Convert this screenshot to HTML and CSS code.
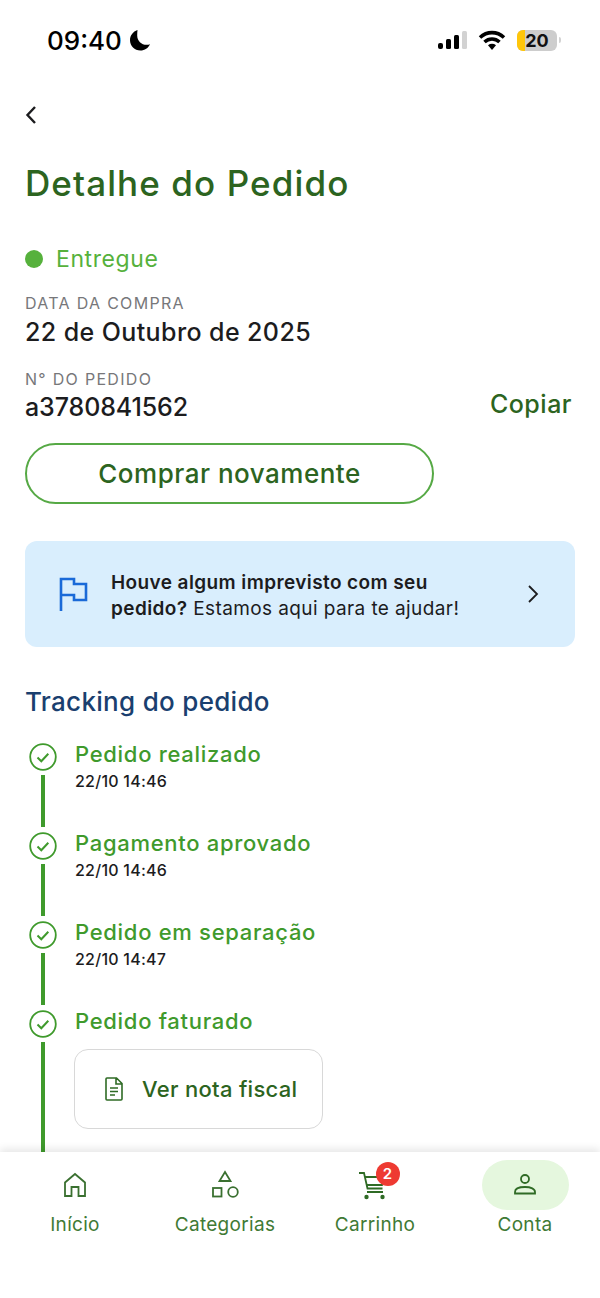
FILE: index.html
```html
<!DOCTYPE html>
<html lang="pt-BR">
<head>
    <meta charset="UTF-8">
    <meta name="viewport" content="width=device-width, initial-scale=1.0">
    <title>Detalhe do Pedido</title>
    <link rel="stylesheet" href="styles.css">
</head>
<body>
    <div class="status-bar">
        <div class="status-left">
            <span class="clock">09:40</span>
            <svg class="moon" width="24" height="24" viewBox="0 0 24 24"><path d="M9.500 2C5 3.500 2 7.500 2 12.200 2 18 6.600 22.500 12.400 22.500c4.300 0 8-2.500 9.600-6.300-1 .4-2.200.6-3.400.6-5.200 0-9.400-4.200-9.400-9.400 0-1.900.1-3.600.3-5.400z" fill="#000"/></svg>
        </div>
        <div class="status-right">
            <svg width="30" height="20" viewBox="0 0 30 20"><rect x="0" y="13" width="5" height="6" rx="2" fill="#000"/><rect x="8" y="9" width="5" height="10" rx="1.500" fill="#000"/><rect x="16" y="5" width="5" height="14" rx="1.500" fill="#000"/><rect x="24" y="1" width="5" height="18" rx="1.500" fill="#d2d2d2"/></svg>
            <svg class="wifi" width="28" height="22" viewBox="0 0 28 22"><path d="M2 8.500C9 2 19 2 26 8.500M6.500 13c4.500-4 10.500-4 15 0" fill="none" stroke="#000" stroke-width="3.600"/><path d="M10 16.200c2.400-1.900 5.600-1.900 8 0L14 21z" fill="#000"/></svg>
            <div class="battery"><span class="battery-fill"></span><span class="battery-num">20</span></div>
            <span class="battery-cap"></span>
        </div>
    </div>

    <main class="content">
        <a class="back" href="#">
            <svg width="12" height="20" viewBox="0 0 12 20"><path d="M10 2L2.500 10 10 18" fill="none" stroke="#1c1c1e" stroke-width="2.400"/></svg>
        </a>

        <h1 class="page-title">Detalhe do Pedido</h1>

        <div class="order-status"><span class="dot"></span>Entregue</div>

        <div class="field-label">DATA DA COMPRA</div>
        <div class="field-value">22 de Outubro de 2025</div>

        <div class="order-row">
            <div>
                <div class="field-label">N° DO PEDIDO</div>
                <div class="field-value">a3780841562</div>
            </div>
            <a class="copy" href="#">Copiar</a>
        </div>

        <button class="btn-again" type="button">Comprar novamente</button>

        <div class="help-card">
            <svg class="flag" width="30" height="35" viewBox="0 0 30 35"><path d="M3 34V2h13v5h12v16H16v-5H3" fill="none" stroke="#1a6ad8" stroke-width="2.600"/></svg>
            <p class="help-text"><b>Houve algum imprevisto com seu</b> <b>pedido?</b> Estamos aqui para te ajudar!</p>
            <svg class="help-arrow" width="12" height="20" viewBox="0 0 12 20"><path d="M2 2l8 8-8 8" fill="none" stroke="#1c1c1e" stroke-width="1.800"/></svg>
        </div>

        <h2 class="tracking-title">Tracking do pedido</h2>

        <ul class="timeline">
            <li class="step">
                <div class="step-mark">
                    <svg width="28" height="28" viewBox="0 0 28 28"><circle cx="14" cy="14" r="12.800" fill="none" stroke="#3f9a2c" stroke-width="1.800"/><path d="M8.500 14.500l3.800 3.800 7-7.500" fill="none" stroke="#3f9a2c" stroke-width="2"/></svg>
                    <span class="step-line"></span>
                </div>
                <div class="step-body">
                    <div class="step-title">Pedido realizado</div>
                    <div class="step-date">22/10 14:46</div>
                </div>
            </li>
            <li class="step">
                <div class="step-mark">
                    <svg width="28" height="28" viewBox="0 0 28 28"><circle cx="14" cy="14" r="12.800" fill="none" stroke="#3f9a2c" stroke-width="1.800"/><path d="M8.500 14.500l3.800 3.800 7-7.500" fill="none" stroke="#3f9a2c" stroke-width="2"/></svg>
                    <span class="step-line"></span>
                </div>
                <div class="step-body">
                    <div class="step-title">Pagamento aprovado</div>
                    <div class="step-date">22/10 14:46</div>
                </div>
            </li>
            <li class="step">
                <div class="step-mark">
                    <svg width="28" height="28" viewBox="0 0 28 28"><circle cx="14" cy="14" r="12.800" fill="none" stroke="#3f9a2c" stroke-width="1.800"/><path d="M8.500 14.500l3.800 3.800 7-7.500" fill="none" stroke="#3f9a2c" stroke-width="2"/></svg>
                    <span class="step-line"></span>
                </div>
                <div class="step-body">
                    <div class="step-title">Pedido em separação</div>
                    <div class="step-date">22/10 14:47</div>
                </div>
            </li>
            <li class="step step-last">
                <div class="step-mark">
                    <svg width="28" height="28" viewBox="0 0 28 28"><circle cx="14" cy="14" r="12.800" fill="none" stroke="#3f9a2c" stroke-width="1.800"/><path d="M8.500 14.500l3.800 3.800 7-7.500" fill="none" stroke="#3f9a2c" stroke-width="2"/></svg>
                    <span class="step-line"></span>
                </div>
                <div class="step-body">
                    <div class="step-title">Pedido faturado</div>
                    <a class="invoice" href="#">
                        <svg width="20" height="24" viewBox="0 0 20 24"><path d="M3 1h9.500l5.500 5.500V22a1 1 0 0 1-1 1H3a1 1 0 0 1-1-1V2a1 1 0 0 1 1-1zM12 1v6h6M6 11h8M6 14.500h8M6 18h5" fill="none" stroke="#2f6b25" stroke-width="1.600"/></svg>
                        Ver nota fiscal
                    </a>
                </div>
            </li>
        </ul>
    </main>

    <nav class="tab-bar">
        <a class="tab" href="#">
            <span class="tab-icon"><svg width="26" height="28" viewBox="0 0 26 28"><path d="M3 25V11.500L13 3l10 8.500V25h-6.500v-9h-7v9z" fill="none" stroke="#3a7030" stroke-width="1.800"/></svg></span>
            <span>Início</span>
        </a>
        <a class="tab" href="#">
            <span class="tab-icon"><svg width="30" height="30" viewBox="0 0 30 30"><path d="M15 2l5.500 9h-11z" fill="none" stroke="#3a7030" stroke-width="1.800"/><rect x="3" y="18" width="8.500" height="8.500" fill="none" stroke="#3a7030" stroke-width="1.800"/><circle cx="23" cy="22" r="4.800" fill="none" stroke="#3a7030" stroke-width="1.800"/></svg></span>
            <span>Categorias</span>
        </a>
        <a class="tab" href="#">
            <span class="tab-icon">
                <svg class="cart" width="30" height="30" viewBox="0 0 30 30"><path d="M1 3h5l3.500 15.500h15M7 7h19l-2 8H8.800M9 22h16" fill="none" stroke="#2f6b25" stroke-width="1.800"/><circle cx="8.500" cy="27" r="2.200" fill="#2f6b25"/><circle cx="24.500" cy="27" r="2.200" fill="#2f6b25"/></svg>
                <span class="badge">2</span>
            </span>
            <span>Carrinho</span>
        </a>
        <a class="tab tab-active" href="#">
            <span class="tab-icon"><svg width="26" height="26" viewBox="0 0 26 26"><circle cx="13" cy="7" r="4" fill="none" stroke="#2f6b25" stroke-width="1.800"/><path d="M3 21.500v-1.500c0-3 4-5 10-5s10 2 10 5v1.500z" fill="none" stroke="#2f6b25" stroke-width="1.800"/></svg></span>
            <span>Conta</span>
        </a>
    </nav>
</body>
</html>
```

FILE: styles.css
```css
* {
    box-sizing: border-box;
}

html, body {
    margin: 0;
    height: 100%;
}

body {
    display: flex;
    flex-direction: column;
    height: 1298px;
    overflow: hidden;
    font-family: Inter, "Liberation Sans", sans-serif;
    background-color: #fff;
    color: #1c1c1e;
}

a {
    color: inherit;
    text-decoration: none;
}

.status-bar {
    flex: none;
    display: flex;
    justify-content: space-between;
    align-items: center;
    height: 80px;
    padding: 0 39px 0 47px;
}

.status-left {
    display: flex;
    align-items: center;
    gap: 6px;
}

.clock {
    font-size: 26px;
    font-weight: 500;
    color: #000;
}

.status-right {
    display: flex;
    align-items: center;
}

.wifi {
    margin-left: 10px;
}

.battery {
    position: relative;
    width: 40px;
    height: 21px;
    margin-left: 11px;
    overflow: hidden;
    border-radius: 6px;
    background-color: #cdcdcd;
    text-align: center;
}

.battery-fill {
    position: absolute;
    left: 0;
    top: 0;
    bottom: 0;
    width: 8px;
    background-color: #ffc60a;
}

.battery-num {
    position: relative;
    font-size: 18px;
    font-weight: 700;
    line-height: 21px;
    color: #111;
}

.battery-cap {
    width: 2px;
    height: 6px;
    margin-left: 2px;
    border-radius: 0 2px 2px 0;
    background-color: #d2d2d2;
}

.content {
    flex: 1;
    min-height: 0;
    overflow: hidden;
    padding: 0 25px;
}

.back {
    display: block;
    height: 20px;
    margin-top: 25px;
}

.page-title {
    margin: 36px 0 0;
    font-size: 35px;
    line-height: 44px;
    letter-spacing: 1.100px;
    font-weight: 500;
    color: #2c6420;
}

.order-status {
    display: flex;
    align-items: center;
    gap: 13px;
    margin-top: 39px;
    font-size: 23px;
    line-height: 30px;
    letter-spacing: .6px;
    color: #56b13c;
}

.dot {
    width: 18px;
    height: 18px;
    border-radius: 50%;
    background-color: #56b13c;
}

.field-label {
    font-size: 16px;
    line-height: 20px;
    letter-spacing: 1.300px;
    color: #77777a;
}

.order-status + .field-label {
    margin-top: 19px;
}

.field-value {
    margin-top: 2px;
    font-size: 25px;
    line-height: 34px;
    letter-spacing: .4px;
    font-weight: 500;
    color: #1c1c1e;
}

.order-row {
    display: flex;
    justify-content: space-between;
    align-items: flex-end;
    margin-top: 20px;
}

.order-row .field-value {
    margin-top: 1px;
    letter-spacing: -.1px;
}

.copy {
    margin: 0 3px 0 0;
    padding-bottom: 3px;
    font-size: 25px;
    line-height: 34px;
    letter-spacing: .5px;
    font-weight: 500;
    color: #2c6420;
}

.btn-again {
    display: block;
    width: 409px;
    height: 61px;
    margin-top: 19px;
    border: 2px solid #56a945;
    border-radius: 31px;
    background-color: #fff;
    font-family: inherit;
    font-size: 26px;
    letter-spacing: .5px;
    font-weight: 500;
    color: #2c6420;
}

.help-card {
    display: flex;
    align-items: center;
    height: 106px;
    margin-top: 37px;
    padding: 0 36px 0 33px;
    border-radius: 12px;
    background-color: #d9eefd;
}

.flag {
    flex: none;
}

.help-text {
    margin: 3px 0 0 23px;
    width: 360px;
    font-size: 19px;
    line-height: 26px;
    letter-spacing: .4px;
    color: #1c1c1e;
}

.help-text b {
    font-weight: 600;
}

.help-arrow {
    flex: none;
    margin-left: auto;
}

.tracking-title {
    margin: 37px 0 0;
    font-size: 26px;
    line-height: 36px;
    letter-spacing: .3px;
    font-weight: 500;
    color: #1a3f6f;
}

.timeline {
    margin: 23px 0 0 4px;
    padding: 0;
    list-style: none;
}

.step {
    display: flex;
    gap: 18px;
    height: 89px;
}

.step-last {
    height: 180px;
}

.step-mark {
    flex: none;
    display: flex;
    flex-direction: column;
    align-items: center;
    width: 28px;
    gap: 4px;
    padding-bottom: 5px;
}

.step-mark svg {
    flex: none;
}

.step-body {
    margin-top: -2px;
}

.step-line {
    flex: 1;
    width: 3.500px;
    background-color: #3f9a2c;
}

.step-title {
    font-size: 22px;
    line-height: 26px;
    letter-spacing: .7px;
    font-weight: 500;
    color: #3f9a2c;
}

.step-date {
    margin-top: 3px;
    font-size: 16px;
    line-height: 22px;
    letter-spacing: .25px;
    font-weight: 500;
    color: #1c1c1e;
}

.invoice {
    display: flex;
    align-items: center;
    gap: 18px;
    width: 249px;
    height: 80px;
    margin: 15px 0 0 -1px;
    padding-left: 29px;
    border: 1.500px solid #d8d8d8;
    border-radius: 14px;
    font-size: 22px;
    letter-spacing: .3px;
    font-weight: 500;
    color: #2c6420;
}

.tab-bar {
    flex: none;
    display: grid;
    grid-template-columns: repeat(4, 1fr);
    height: 146px;
    padding-top: 8px;
    background-color: #fff;
    box-shadow: 0 -3px 8px rgba(0, 0, 0, .1);
    z-index: 1;
}

.tab {
    display: flex;
    flex-direction: column;
    align-items: center;
    font-size: 19px;
    line-height: 28px;
    letter-spacing: .3px;
    color: #3f7a35;
}

.tab-icon {
    position: relative;
    display: flex;
    align-items: center;
    justify-content: center;
    width: 87px;
    height: 50px;
    margin-bottom: 1px;
    border-radius: 25px;
}

.tab-active .tab-icon {
    background-color: #e5f7de;
}

.cart {
    margin-left: -4px;
}

.badge {
    position: absolute;
    top: 2px;
    right: 19px;
    width: 24px;
    height: 24px;
    border-radius: 50%;
    background-color: #ee3a32;
    font-size: 15px;
    line-height: 24px;
    font-weight: 600;
    text-align: center;
    color: #fff;
}
```
